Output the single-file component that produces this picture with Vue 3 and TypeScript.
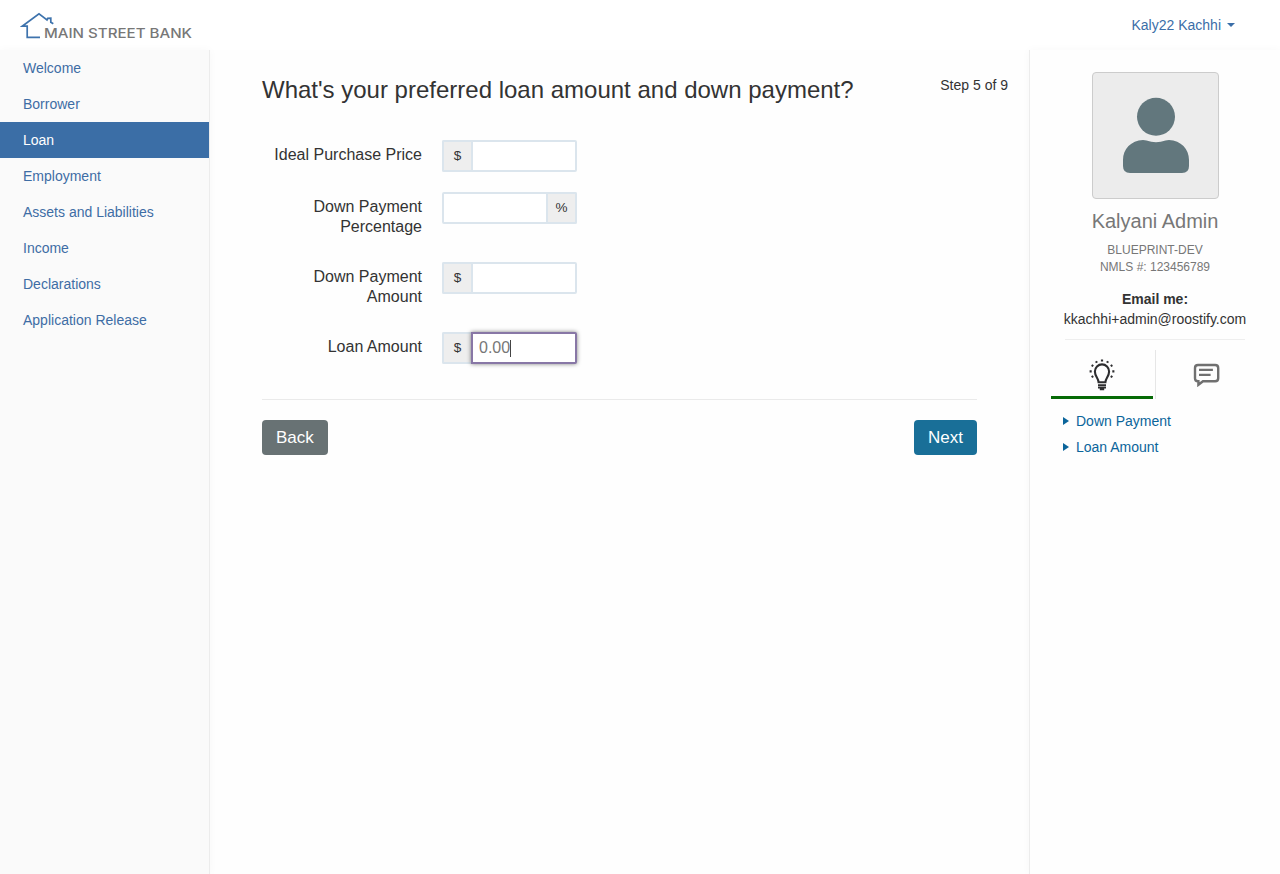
<script setup lang="ts">
import { ref } from 'vue'

interface Field {
  id: string
  label: string
  unit: string
  trailing?: boolean
  focused?: boolean
}

const sections: string[] = [
  'Welcome',
  'Borrower',
  'Loan',
  'Employment',
  'Assets and Liabilities',
  'Income',
  'Declarations',
  'Application Release',
]
const current = ref('Loan')

const fields: Field[] = [
  { id: 'price', label: 'Ideal Purchase Price', unit: '$' },
  { id: 'percentage', label: 'Down Payment Percentage', unit: '%', trailing: true },
  { id: 'down', label: 'Down Payment Amount', unit: '$' },
  { id: 'loan', label: 'Loan Amount', unit: '$', focused: true },
]

const tips: string[] = ['Down Payment', 'Loan Amount']
</script>

<template>
  <div class="page">
    <header class="topbar">
      <svg class="logo" width="176" height="30" viewBox="0 0 176 30" role="img" aria-label="Main Street Bank">
        <path
          d="M20 25.300H7.200V14.200H2.200L19 1.900L27 7.900L27.700 6.400L30.800 6.200V10.200L33.300 11.700"
          fill="none" stroke="#3e73ad" stroke-width="1.700"
        />
        <text class="logo-text" x="24" y="26" textLength="148" lengthAdjust="spacingAndGlyphs">MAIN STREET BANK</text>
      </svg>
      <a class="user">Kaly22 Kachhi<i class="caret"></i></a>
    </header>

    <div class="body">
      <nav class="sidebar">
        <a
          v-for="item in sections" :key="item" class="nav-item"
          :class="{ active: item === current }" @click="current = item"
        >{{ item }}</a>
      </nav>

      <main class="main">
        <div class="head">
          <h1>What's your preferred loan amount and down payment?</h1>
          <span class="step">Step 5 of 9</span>
        </div>
        <form class="form" @submit.prevent>
          <div v-for="f in fields" :key="f.id" class="row">
            <label class="label">{{ f.label }}</label>
            <div class="group" :class="{ trailing: f.trailing }">
              <span class="unit">{{ f.unit }}</span>
              <div class="input" :class="{ focused: f.focused }">
                <template v-if="f.focused"><span>0.00</span><i class="cursor"></i></template>
              </div>
            </div>
          </div>
        </form>
        <div class="actions">
          <button class="btn back">Back</button>
          <button class="btn next">Next</button>
        </div>
      </main>

      <aside class="panel">
        <div class="avatar">
          <svg width="125" height="125" viewBox="0 0 125 125">
            <circle cx="63" cy="43.800" r="19" fill="#62777d" />
            <path
              d="M50 67Q52 67 53.500 67.600Q63 71 72.500 67.600Q74 67 76 67C88 67.500 96 76 96 87V93Q96 100 89 100H37Q30 100 30 93V87C30 76 38 67.500 50 67Z"
              fill="#62777d"
            />
          </svg>
        </div>
        <div class="name">Kalyani Admin</div>
        <div class="org">BLUEPRINT-DEV<br>NMLS #: 123456789</div>
        <div class="mail"><b>Email me:</b><br>kkachhi+admin@roostify.com</div>
        <div class="tabs">
          <div class="tab selected">
            <svg width="28" height="33" viewBox="0 0 28 33" fill="none" stroke="#2d2d2f">
              <path
                d="M10.600 24.200C10.600 20.500 6.900 18.700 6.900 13.500A7.100 7.100 0 0 1 21.100 13.500C21.100 18.700 17.400 20.500 17.400 24.200Z"
                stroke-width="2.100"
              />
              <path d="M10 27.100H18M10 29.500H18M11.800 31.300H16.200" stroke-width="1.800" />
              <path
                d="M14 1.600V3.600M8 3.200L8.900 4.700M20 3.200L19.100 4.700M3.600 7.100L5.300 8.100M24.400 7.100L22.700 8.100M1.600 13.300H3.700M26.400 13.300H24.300M3.600 19.100L5.300 18.100M24.400 19.100L22.700 18.100"
                stroke-width="2.200"
              />
            </svg>
          </div>
          <div class="tab">
            <svg width="28" height="25" viewBox="0 0 28 25" fill="none" stroke="#707070">
              <path
                d="M5 3H22.200Q25.200 3 25.200 6V16.200Q25.200 19.200 22.200 19.200H10L5.400 22.800V19.200H5Q2 19.200 2 16.200V6Q2 3 5 3Z"
                stroke-width="2.400"
              />
              <path d="M6 7.900H19.900M6 12.900H17.600" stroke-width="2.300" />
            </svg>
          </div>
        </div>
        <ul class="tips">
          <li v-for="tip in tips" :key="tip"><i class="arrow"></i><a>{{ tip }}</a></li>
        </ul>
      </aside>
    </div>
  </div>
</template>

<style>
body {
  margin: 0;
  overflow: hidden;
}
</style>

<style scoped>
* {
  box-sizing: border-box;
}
.page {
  display: flex;
  flex-direction: column;
  width: 1280px;
  height: 874px;
  background: #fefefe;
  color: #333;
  font: 14px/20px "Liberation Sans", Arial, sans-serif;
}
.topbar {
  display: flex;
  justify-content: space-between;
  align-items: flex-start;
  height: 50px;
  padding: 12px 45px 0 20px;
  background: #fff;
}
.logo-text {
  font: 500 12.800px Inter, sans-serif;
  fill: #777;
}
.user {
  display: flex;
  align-items: center;
  margin-top: 3px;
  color: #3b6ea8;
}
.caret {
  margin-left: 6px;
  border: 4px solid transparent;
  border-top-color: #3b6ea8;
  border-bottom: 0;
}
.body {
  display: flex;
  flex: 1;
}
.sidebar {
  width: 210px;
  background: #fafafa;
  border-right: 1px solid #ececec;
  box-shadow: 0 0 9px rgba(0, 0, 0, 0.03);
}
.nav-item {
  display: block;
  height: 36px;
  padding: 8px 23px;
  color: #3e6da5;
}
.nav-item.active {
  background: #3b6ea6;
  color: #fff;
}
.main {
  width: 819px;
  padding: 25px 21px 0 52px;
}
.head {
  display: flex;
  justify-content: space-between;
}
h1 {
  margin: 0;
  font-size: 24px;
  line-height: 30px;
  font-weight: 400;
}
.step {
  line-height: 20px;
}
.form {
  display: flex;
  flex-direction: column;
  gap: 20px;
  width: 715px;
  margin-top: 35px;
  padding-bottom: 35px;
  border-bottom: 1px solid #eaeaea;
}
.row {
  display: flex;
  gap: 20px;
}
.label {
  width: 160px;
  padding: 5px 0;
  font-size: 16px;
  text-align: right;
}
.row:nth-child(2) .label,
.row:nth-child(3) .label {
  padding-left: 45px;
}
.group {
  display: flex;
  width: 135px;
  height: 32px;
}
.group.trailing {
  flex-direction: row-reverse;
}
.unit {
  display: flex;
  align-items: center;
  justify-content: center;
  width: 29px;
  border: 2px solid #dbe5ed;
  border-right: 0;
  border-radius: 2px 0 0 2px;
  background: #eee;
  font-size: 13.500px;
}
.trailing .unit {
  border: 2px solid #dbe5ed;
  border-left: 0;
  border-radius: 0 2px 2px 0;
}
.input {
  display: flex;
  align-items: center;
  width: 106px;
  padding: 0 6px;
  border: 2px solid #dbe5ed;
  border-radius: 0 2px 2px 0;
  background: #fff;
  color: #777;
  font-size: 16px;
}
.trailing .input {
  border-radius: 2px 0 0 2px;
}
.input.focused {
  border-color: #8877a6;
  box-shadow: 0 0 4px rgba(0, 0, 0, 0.5);
}
.cursor {
  width: 1px;
  height: 17px;
  background: #444;
}
.actions {
  display: flex;
  justify-content: space-between;
  width: 715px;
  margin-top: 20px;
}
.btn {
  height: 35px;
  padding: 0 14px;
  border: 0;
  border-radius: 4px;
  color: #fff;
  font: 17px/34px "Liberation Sans", Arial, sans-serif;
}
.back {
  background: #687274;
}
.next {
  background: #196f98;
}
.panel {
  width: 251px;
  padding-top: 22px;
  border-left: 1px solid #ececec;
  box-shadow: 0 0 9px rgba(0, 0, 0, 0.03);
  text-align: center;
}
.avatar {
  width: 127px;
  height: 127px;
  margin: 0 auto;
  border: 1px solid #ccc;
  border-radius: 4px;
  background: #ececec;
}
.avatar svg,
.tab svg {
  display: block;
}
.name {
  margin-top: 9px;
  color: #777;
  font-size: 20px;
  line-height: 26px;
}
.org {
  margin-top: 8px;
  color: #777;
  font-size: 12px;
  line-height: 17px;
}
.mail {
  margin: 13px 0 0;
}
.mail::after {
  content: "";
  display: block;
  width: 180px;
  height: 1px;
  margin: 10px auto 0;
  background: #eee;
}
.tabs {
  display: flex;
  height: 49px;
  margin: 10px 21px 0;
}
.tab {
  display: flex;
  align-items: center;
  justify-content: center;
  width: 102px;
}
.tab + .tab {
  width: 103px;
  margin-left: 2px;
  border-left: 1px solid #e6e6e6;
}
.selected {
  padding-top: 3px;
  border-bottom: 3px solid #066a06;
}
.tips {
  margin: 12px 0 0;
  padding: 0 0 0 33px;
  list-style: none;
  text-align: left;
}
.tips li {
  display: flex;
  align-items: center;
  height: 20px;
  margin-bottom: 6px;
  color: #0b659b;
}
.arrow {
  margin-right: 7px;
  border: 4px solid transparent;
  border-left: 6px solid #0b659b;
  border-right: 0;
}
</style>
